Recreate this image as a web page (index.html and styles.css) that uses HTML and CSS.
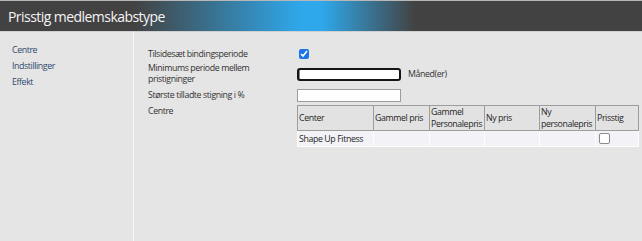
FILE: index.html
```html
<!DOCTYPE html>
<html lang="da">
<head>
    <meta charset="UTF-8">
    <meta name="viewport" content="width=device-width, initial-scale=1.0">
    <title>Prisstig medlemskabstype</title>
    <link rel="stylesheet" href="styles.css">
</head>
<body>
    <div class="topbar">
        <h1>Prisstig medlemskabstype</h1>
    </div>
    <div class="main">
        <div class="sidebar">
            <a href="#">Centre</a>
            <a href="#">Indstillinger</a>
            <a href="#">Effekt</a>
        </div>
        <div class="content">
            <div class="form">
                <label class="lbl">Tilsidesæt bindingsperiode</label>
                <div class="field"><input type="checkbox" class="check" checked></div>

                <label class="lbl">Minimums periode mellem<br>pristigninger</label>
                <div class="field"><input type="text" class="txt focused"><span class="unit">Måned(er)</span></div>

                <label class="lbl">Største tilladte stigning i %</label>
                <div class="field"><input type="text" class="txt"></div>

                <label class="lbl top">Centre</label>
                <div class="field top">
                    <table class="grid">
                        <colgroup>
                            <col class="w76">
                            <col class="w56">
                            <col class="w55">
                            <col class="w55">
                            <col class="w56">
                            <col class="w43">
                        </colgroup>
                        <thead>
                            <tr>
                                <th>Center</th>
                                <th>Gammel pris</th>
                                <th>Gammel Personalepris</th>
                                <th>Ny pris</th>
                                <th>Ny personalepris</th>
                                <th>Prisstig</th>
                            </tr>
                        </thead>
                        <tbody>
                            <tr>
                                <td>Shape Up Fitness</td>
                                <td></td>
                                <td></td>
                                <td></td>
                                <td></td>
                                <td><span class="box"></span></td>
                            </tr>
                        </tbody>
                    </table>
                </div>
            </div>
        </div>
    </div>
</body>
</html>
```

FILE: styles.css
```css
body {
    margin: 0;
    background: #e5e5e5;
    font-family: "Open Sans", "DejaVu Sans", sans-serif;
    font-size: 8.8px;
    letter-spacing: -0.4px;
    color: #333;
}
.topbar {
    height: 30px;
    border-top: 1px solid #b7b7b7;
    border-bottom: 1px solid #cfcfcf;
    background: linear-gradient(to right, #434242 0, #434242 135px, #2ea8ea 300px, #2ea8ea 322px, #434242 415px, #434242 100%);
}
h1 {
    margin: 0;
    padding-left: 8px;
    font-size: 14px;
    letter-spacing: -0.55px;
    font-weight: normal;
    line-height: 31px;
    color: #f4f4f4;
}
.main {
    display: flex;
    height: calc(100vh - 32px);
}
.sidebar {
    width: 134px;
    border-right: 1px solid #f6f6f6;
    padding: 10px 0 0 12px;
    box-sizing: border-box;
    display: flex;
    flex-direction: column;
}
.sidebar a {
    line-height: 16px;
    color: #2d4a6d;
    text-decoration: none;
}
.content {
    flex: 1;
    padding: 15px 0 0 14px;
}
.form {
    display: grid;
    grid-template-columns: 149px 341px;
    grid-template-rows: 14px 26px 16px auto;
    align-items: center;
}
.lbl {
    line-height: 11px;
}
.top {
    align-self: start;
    margin-top: 2px;
}
.lbl.top {
    line-height: 12px;
}
.field {
    display: flex;
    align-items: center;
}
.check {
    width: 10px;
    height: 10px;
    margin: 0 0 0 2px;
    accent-color: #1a73e8;
}
.txt {
    width: 104px;
    height: 13px;
    box-sizing: border-box;
    margin: 0;
    padding: 0 2px;
    border: 1px solid #9c9c9c;
    background: #fff;
    font: inherit;
}
.txt.focused {
    border: 2px solid #151515;
    border-radius: 3px;
    box-shadow: inset 1px 0 0 #888;
}
.unit {
    margin-left: 7px;
}
.grid {
    width: 341px;
    table-layout: fixed;
    border-collapse: collapse;
    color: #262626;
}
.w76 { width: 76px; }
.w56 { width: 56px; }
.w55 { width: 55px; }
.w43 { width: 43px; }
.grid th {
    height: 21px;
    padding: 0 1px;
    background: #e2e2e2;
    border: 1px solid #9d9d9d;
    font-weight: normal;
    text-align: left;
    vertical-align: middle;
    line-height: 12px;
}
.grid td {
    height: 15px;
    padding: 0 1px;
    background: #f3f3f7;
    border: 1px solid #fdfdfd;
    border-top: none;
    white-space: nowrap;
}
.box {
    display: block;
    width: 9px;
    height: 9px;
    margin-left: 2px;
    border: 1px solid #8a8a8a;
    border-radius: 2px;
    background: #fff;
}
```
